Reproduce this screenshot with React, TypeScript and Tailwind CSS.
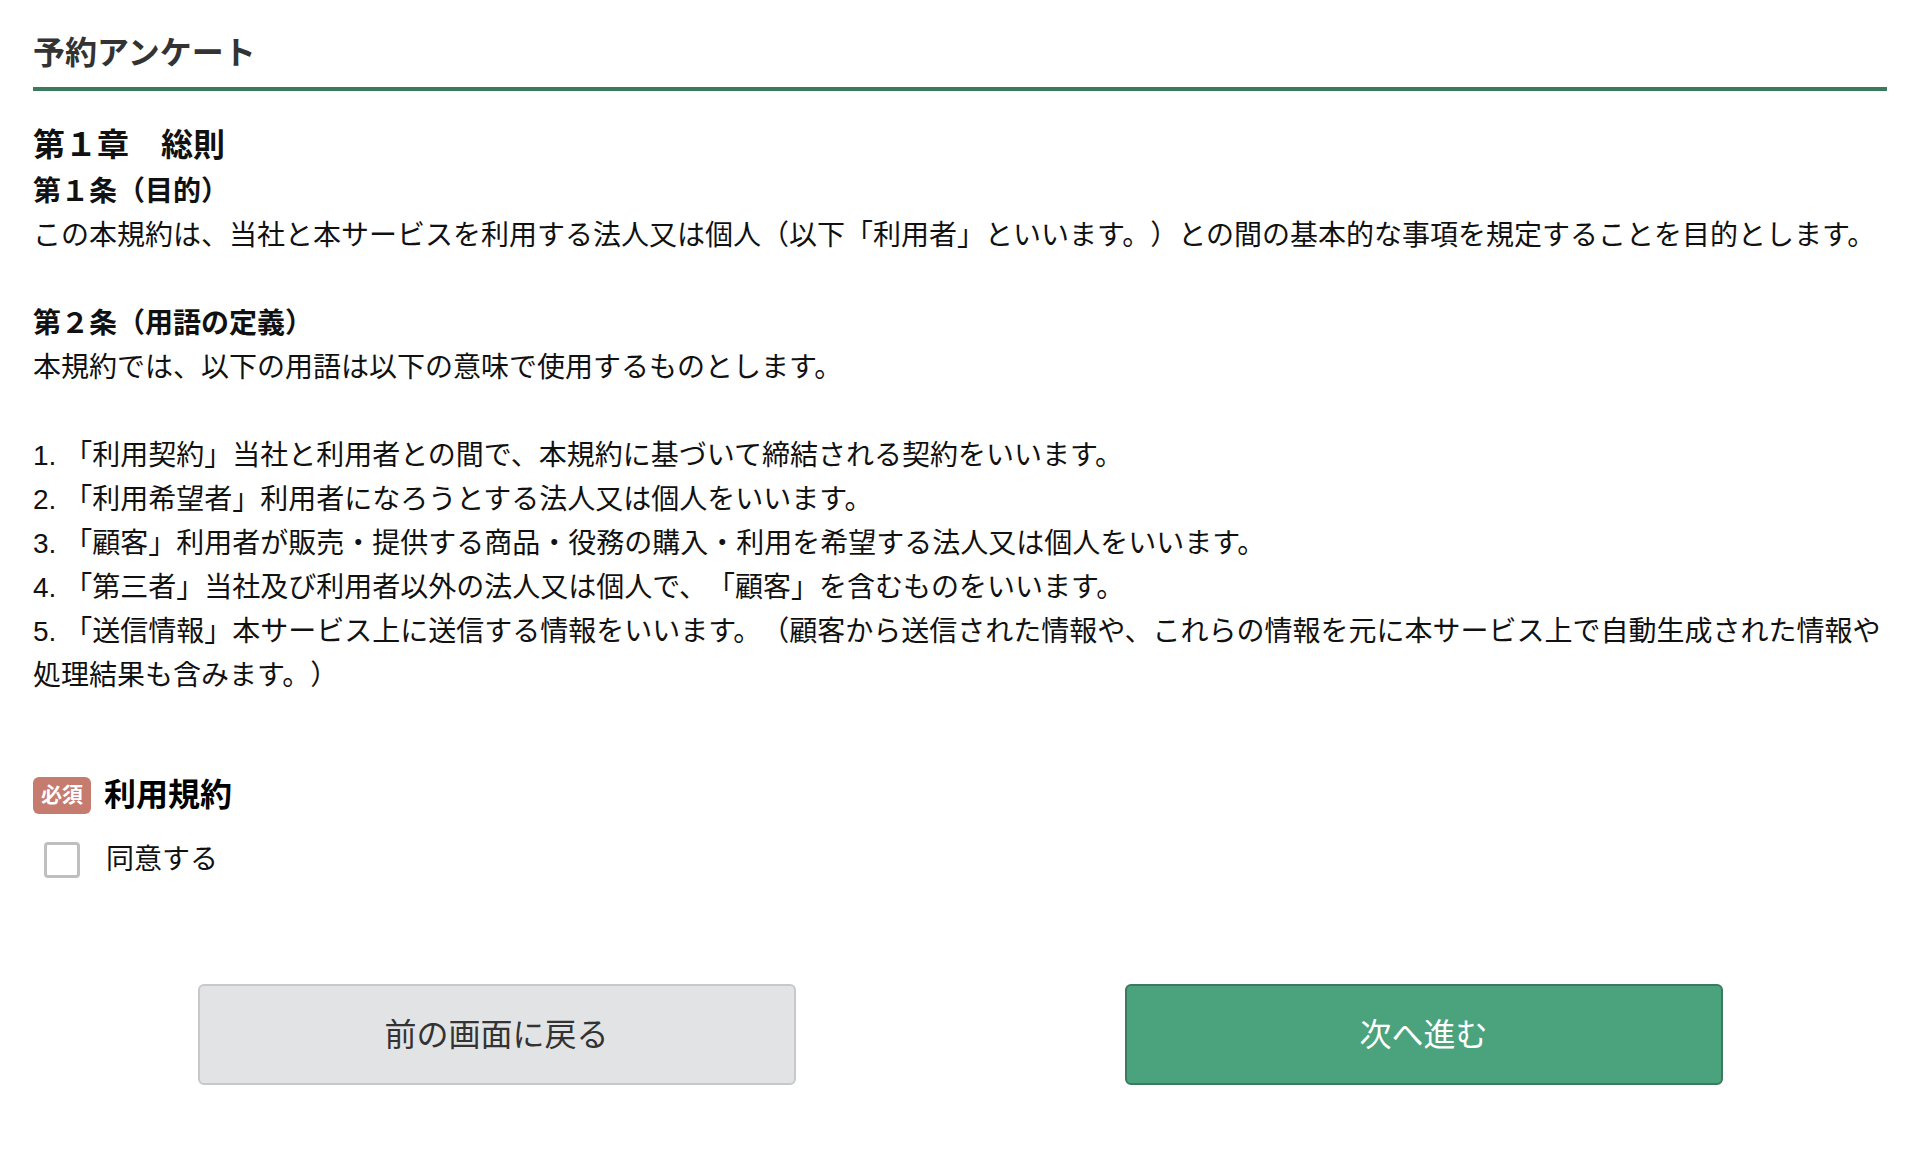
import React, { useState } from 'react';

const definitions = [
  '1. 「利用契約」当社と利用者との間で、本規約に基づいて締結される契約をいいます。',
  '2. 「利用希望者」利用者になろうとする法人又は個人をいいます。',
  '3. 「顧客」利用者が販売・提供する商品・役務の購入・利用を希望する法人又は個人をいいます。',
  '4. 「第三者」当社及び利用者以外の法人又は個人で、「顧客」を含むものをいいます。',
];

const App: React.FC = () => {
  const [agreed, setAgreed] = useState(false);

  return (
    <div
      className="min-h-screen bg-white pl-[33px] pr-[27px] pt-[31px] text-[#111] [text-spacing-trim:space-all]"
      style={{ fontFamily: '"Liberation Sans", "Noto Sans CJK JP", sans-serif' }}
    >
      <h1 className="border-b-4 border-[#3b7a5e] pb-[12px] text-[32px] font-bold leading-[44px] text-[#333]">
        予約アンケート
      </h1>

      <div className="text-[28px] leading-[44px]">
        <h2 className="mt-[32px] text-[32px] font-bold leading-[44px]">第１章　総則</h2>
        <h3 className="mt-[3px] font-bold">第１条（目的）</h3>
        <p>
          この本規約は、当社と本サービスを利用する法人又は個人（以下「利用者」といいます。）との間の基本的な事項を規定することを目的とします。
        </p>
        <div className="h-[44px]" />
        <h3 className="font-bold">第２条（用語の定義）</h3>
        <p>本規約では、以下の用語は以下の意味で使用するものとします。</p>
        <div className="h-[44px]" />
        {definitions.map((line) => (
          <p key={line}>{line}</p>
        ))}
        <p className="whitespace-nowrap">
          5. 「送信情報」本サービス上に送信する情報をいいます。（顧客から送信された情報や、これらの情報を元に本サービス上で自動生成された情報や
        </p>
        <p>処理結果も含みます。）</p>
      </div>

      <div className="mt-[75px] flex h-[44px] items-center gap-[13px]">
        <span className="flex h-[37px] items-center rounded-[6px] bg-[#c57b6e] px-[8px] text-[21px] font-bold text-white">
          必須
        </span>
        <span className="text-[32px] font-bold leading-[44px] text-black">利用規約</span>
      </div>

      <label className="mt-[21px] flex h-[44px] cursor-pointer items-center pl-[11px]">
        <input
          type="checkbox"
          checked={agreed}
          onChange={(e) => setAgreed(e.target.checked)}
          className="sr-only"
        />
        <span
          className={`h-[36px] w-[36px] rounded-[4px] border-[3px] ${
            agreed ? 'border-[#4aa37c] bg-[#4aa37c]' : 'border-[#bfbfbf] bg-white'
          }`}
        />
        <span className="ml-[26px] text-[28px] leading-[44px]">同意する</span>
      </label>

      <div className="mt-[102px] flex justify-center gap-[329px]">
        <button className="flex h-[101px] w-[598px] items-center justify-center rounded-[6px] border-2 border-[#c6c8cb] bg-[#e2e3e5] text-[32px] text-[#333]">
          前の画面に戻る
        </button>
        <button className="flex h-[101px] w-[598px] items-center justify-center rounded-[6px] border-2 border-[#3b7a5e] bg-[#4aa37c] text-[32px] text-white">
          次へ進む
        </button>
      </div>
    </div>
  );
};

export default App;
